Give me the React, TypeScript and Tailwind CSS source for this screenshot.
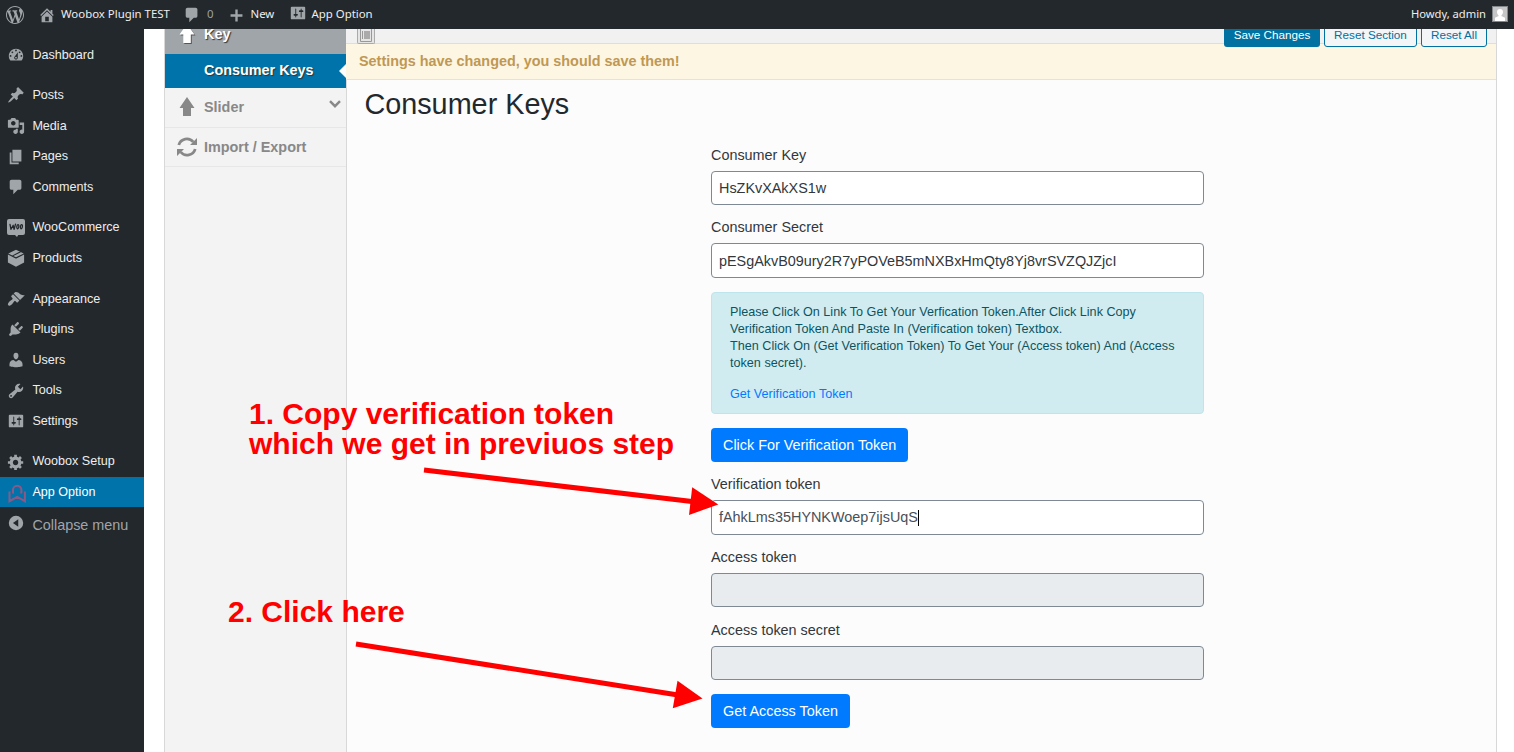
import React from "react";

const icons = {
  wordpress:
    "M20 10c0-5.51-4.49-10-10-10C4.48 0 0 4.49 0 10c0 5.52 4.48 10 10 10 5.51 0 10-4.48 10-10zM7.78 15.37L4.37 6.22c.55-.02 1.17-.08 1.17-.08.5-.06.44-1.13-.06-1.11 0 0-1.45.11-2.37.11-.18 0-.37 0-.58-.01C4.12 2.69 6.87 1.11 10 1.11c2.33 0 4.45.87 6.05 2.34-.68-.11-1.65.39-1.65 1.58 0 .74.45 1.36.9 2.1.35.61.55 1.36.55 2.46 0 1.49-1.4 5-1.4 5l-3.03-8.37c.54-.02.82-.17.82-.17.5-.05.44-1.25-.06-1.22 0 0-1.44.12-2.38.12-.87 0-2.33-.12-2.33-.12-.5-.03-.56 1.2-.06 1.22l.92.08 1.26 3.41zM17.41 10c.24-.64.74-1.87.43-4.25.7 1.29 1.05 2.71 1.05 4.25 0 3.29-1.73 6.24-4.4 7.78.97-2.59 1.94-5.2 2.92-7.78zM6.1 18.09C3.12 16.65 1.11 13.53 1.11 10c0-1.3.23-2.48.72-3.59C3.25 10.3 4.67 14.2 6.1 18.09zm4.03-6.63l2.58 6.98c-.86.29-1.76.45-2.71.45-.79 0-1.57-.11-2.29-.33.81-2.38 1.62-4.74 2.42-7.1z",
  home: "M16 8.5l1.53 1.53-1.06 1.06L10 4.6l-6.47 6.49-1.06-1.06L10 2.5l4 4v-2h2v4zm-6-2.46l6 5.99V18H4v-5.97zM12 17v-5H8v5h4z",
  comments: "M5 2h9c1.1 0 2 .9 2 2v7c0 1.1-.9 2-2 2h-2l-5 5v-5H5c-1.1 0-2-.9-2-2V4c0-1.1.9-2 2-2z",
  plus: "M17 8.600v2.800h-5.600V17H8.600v-5.600H3V8.600h5.600V3h2.800v5.600z",
  dashboard:
    "M3.76 16h12.48c1.1-1.37 1.76-3.11 1.76-5 0-4.42-3.58-8-8-8s-8 3.58-8 8c0 1.89.66 3.63 1.76 5zM10 4c.55 0 1 .45 1 1s-.45 1-1 1-1-.45-1-1 .45-1 1-1zM6 6c.55 0 1 .45 1 1s-.45 1-1 1-1-.45-1-1 .45-1 1-1zm8 0c.55 0 1 .45 1 1s-.45 1-1 1-1-.45-1-1 .45-1 1-1zm-5.37 5.55L12 7v6c0 1.1-.9 2-2 2s-2-.9-2-2c0-.57.24-1.08.63-1.45zM4 10c.55 0 1 .45 1 1s-.45 1-1 1-1-.45-1-1 .45-1 1-1zm12 0c.55 0 1 .45 1 1s-.45 1-1 1-1-.45-1-1 .45-1 1-1zm-5 3c0-.55-.45-1-1-1s-1 .45-1 1 .45 1 1 1 1-.45 1-1z",
  post: "M10.44 3.02l1.82-1.82 6.36 6.35-1.83 1.82c-1.05-.68-2.48-.57-3.41.36l-.75.75c-.92.93-1.04 2.35-.35 3.41l-1.83 1.82-2.41-2.41-2.8 2.79c-.42.42-3.38 2.71-3.8 2.29s1.86-3.39 2.28-3.81l2.79-2.79L4.1 9.36l1.83-1.82c1.05.69 2.48.57 3.4-.36l.75-.75c.93-.92 1.05-2.35.36-3.41z",
  media:
    "M13 11V4c0-.55-.45-1-1-1h-1.67L9 1H5L3.67 3H2c-.55 0-1 .45-1 1v7c0 .55.45 1 1 1h10c.55 0 1-.45 1-1zM7 4.5c1.38 0 2.5 1.12 2.5 2.5S8.38 9.5 7 9.5 4.5 8.38 4.5 7 5.62 4.5 7 4.5zM14 6h5v10.5c0 1.38-1.12 2.5-2.5 2.5S14 17.88 14 16.5s1.12-2.5 2.5-2.5c.17 0 .34.02.5.05V9h-3V6zm-4 8.05V13h2v3.5c0 1.38-1.12 2.5-2.5 2.5S7 17.88 7 16.5 8.12 14 9.5 14c.17 0 .34.02.5.05z",
  page: "M6 15V2h10v13H6zm-1 1h8v2H3V5h2v11z",
  products: "M10 .8l8.6 4.1-8.6 4.4-3-1.5 8.4-4.3-1.1-.6-8.5 4.3-4.4-2.3zM1 6l8.6 4.5h.8L19 6v9l-9 4.6L1 15z",
  appearance:
    "M14.48 11.06L7.41 3.99l1.5-1.5c.5-.56 2.3-.47 3.51.32 1.21.8 1.43 1.28 2.91 2.1 1.18.64 2.45 1.26 4.45.85zm-.71.71L6.7 4.7 4.93 6.47c-.39.39-.39 1.02 0 1.41l1.06 1.06c.39.39.39 1.03 0 1.42-.6.6-1.43 1.11-2.21 1.69-.35.26-.7.53-1.01.84C1.43 14.23.4 16.08 1.4 17.07c.99 1 2.84-.03 4.18-1.36.31-.31.58-.66.85-1.02.57-.78 1.08-1.61 1.69-2.21.39-.39 1.02-.39 1.41 0l1.06 1.06c.39.39 1.02.39 1.41 0z",
  plugins:
    "M13.11 4.36L9.87 7.6 8 5.73l3.24-3.24c.35-.34 1.05-.2 1.56.32.52.51.66 1.21.31 1.55zm-8 1.77l.91-1.12 9.01 9.01-1.19.84c-.71.71-2.63 1.16-3.82 1.16H6.14L4.9 17.26c-.59.59-1.54.59-2.12 0-.59-.58-.59-1.53 0-2.12l1.24-1.24v-3.88c0-1.13.4-3.19 1.09-3.89zm7.26 3.97l3.24-3.24c.34-.35 1.04-.21 1.55.31.52.51.66 1.21.31 1.55l-3.24 3.25z",
  users:
    "M10 9.25c-2.27 0-2.73-3.44-2.73-3.44C7 4.02 7.82 2 9.97 2c2.16 0 2.98 2.02 2.71 3.81 0 0-.41 3.44-2.68 3.44zm0 2.57L12.72 10c2.39 0 4.52 2.33 4.52 4.53v2.49s-3.65 1.13-7.24 1.13c-3.65 0-7.24-1.13-7.24-1.13v-2.49c0-2.25 1.94-4.48 4.47-4.48z",
  tools:
    "M16.68 9.77c-1.34 1.34-3.3 1.67-4.95.99l-5.41 6.52c-.99.99-2.59.99-3.58 0s-.99-2.59 0-3.57l6.52-5.42c-.68-1.65-.35-3.61.99-4.95 1.28-1.28 3.12-1.62 4.72-1.06l-2.89 2.89 2.82 2.82 2.86-2.87c.53 1.58.18 3.39-1.08 4.65zM3.81 16.21c.4.39 1.04.39 1.43 0 .4-.4.4-1.04 0-1.43-.39-.4-1.03-.4-1.43 0-.39.39-.39 1.03 0 1.43z",
  settings:
    "M18 16V4c0-.55-.45-1-1-1H3c-.55 0-1 .45-1 1v12c0 .55.45 1 1 1h14c.55 0 1-.45 1-1zM8 11h1c.55 0 1 .45 1 1s-.45 1-1 1H8v1.5c0 .28-.22.5-.5.5s-.5-.22-.5-.5V13H6c-.55 0-1-.45-1-1s.45-1 1-1h1V5.5c0-.28.22-.5.5-.5s.5.22.5.5V11zm5-2h-1c-.55 0-1-.45-1-1s.45-1 1-1h1V5.5c0-.28.22-.5.5-.5s.5.22.5.5V7h1c.55 0 1 .45 1 1s-.45 1-1 1h-1v5.5c0 .28-.22.5-.5.5s-.5-.22-.5-.5V9z",
  generic:
    "M18 12h-2.18c-.17.7-.44 1.35-.81 1.93l1.54 1.54-2.1 2.1-1.54-1.54c-.58.36-1.23.63-1.91.79V19H8v-2.18c-.68-.16-1.33-.43-1.91-.79l-1.54 1.54-2.12-2.12 1.54-1.54c-.36-.58-.63-1.23-.79-1.91H1V9.03h2.17c.16-.7.44-1.35.8-1.94L2.43 5.55l2.1-2.1 1.54 1.54c.58-.37 1.24-.64 1.93-.81V2h3v2.18c.68.16 1.33.43 1.91.79l1.54-1.54 2.12 2.12-1.54 1.54c.36.59.64 1.24.8 1.94H18V12zm-8.5 1.5c1.66 0 3-1.34 3-3s-1.34-3-3-3-3 1.34-3 3 1.34 3 3 3z",
  collapse: "M10 2a8 8 0 1 0 0 16 8 8 0 0 0 0-16zM12.5 5.8v8.4L6.6 10z",
};

type IconName = keyof typeof icons;

function Icon({ name, className }: { name: IconName; className?: string }) {
  return (
    <svg viewBox="0 0 20 20" fill="currentColor" fillRule="evenodd" className={className ?? "size-[18px]"}>
      <path d={icons[name]} />
    </svg>
  );
}

function WooIcon() {
  return (
    <svg viewBox="0 0 18 18" className="size-[18px]">
      <path d="M2 0h14a2 2 0 0 1 2 2v12a2 2 0 0 1-2 2h-4.800l-1.200 2-2-2H2a2 2 0 0 1-2-2V2a2 2 0 0 1 2-2z" fill="#a0a5aa" />
      <g fill="none" stroke="#23282d" strokeWidth="1.300" strokeLinecap="round" strokeLinejoin="round">
        <path d="M3 5.400l1 4.900 2.200-4 .9 4 1.400-5.200" />
        <ellipse cx="10.800" cy="7.700" rx="1" ry="2.100" transform="rotate(12 10.800 7.700)" />
        <ellipse cx="14.400" cy="7.700" rx="1" ry="2.100" transform="rotate(12 14.400 7.700)" />
      </g>
    </svg>
  );
}

function AppOptionIcon() {
  return (
    <svg viewBox="0 0 18 20" className="ml-px h-5 w-[18px] shrink-0 translate-y-[2px]" fill="none" stroke="#8a5a86" strokeWidth="2">
      <path d="M5 9V6a4.200 4.200 0 0 1 8.400 0v3" />
      <path d="M6 8.800H4.500M12.400 8.800h1.500M1.500 7.500v9.700l7.700-4.300 7.700 4.300V7.500" />
    </svg>
  );
}

const menu: { label: string; icon: IconName | "woo" | "app" }[][] = [
  [{ label: "Dashboard", icon: "dashboard" }],
  [
    { label: "Posts", icon: "post" },
    { label: "Media", icon: "media" },
    { label: "Pages", icon: "page" },
    { label: "Comments", icon: "comments" },
  ],
  [
    { label: "WooCommerce", icon: "woo" },
    { label: "Products", icon: "products" },
  ],
  [
    { label: "Appearance", icon: "appearance" },
    { label: "Plugins", icon: "plugins" },
    { label: "Users", icon: "users" },
    { label: "Tools", icon: "tools" },
    { label: "Settings", icon: "settings" },
  ],
  [
    { label: "Woobox Setup", icon: "generic" },
    { label: "App Option", icon: "app" },
  ],
];

function AdminBar() {
  return (
    <header className="flex h-[29px] shrink-0 items-center bg-[#23282d] font-['Noto_Sans',sans-serif] text-[11.400px] leading-[29px] text-[#eee]">
      <span className="ml-[6px] text-[#a0a5aa]"><Icon name="wordpress" /></span>
      <span className="ml-[14px] text-[#a0a5aa]"><Icon name="home" /></span>
      <span className="ml-[5px] w-[109px] whitespace-nowrap -translate-y-px">Woobox Plugin TEST</span>
      <span className="ml-[13px] mt-[1px] text-[#a0a5aa]"><Icon name="comments" /></span>
      <span className="ml-[6px] text-[#9ca1a6] -translate-y-px">0</span>
      <span className="ml-[14px] mt-px text-[#a0a5aa]"><Icon name="plus" className="size-[17px]" /></span>
      <span className="ml-[6px] w-[24px] whitespace-nowrap -translate-y-px">New</span>
      <span className="ml-[14px] -mt-[3px] text-[#a0a5aa]"><Icon name="settings" /></span>
      <span className="ml-[5px] whitespace-nowrap -translate-y-px">App Option</span>
      <span className="ml-auto text-[11.200px] -translate-y-px">Howdy, admin</span>
      <svg viewBox="0 0 16 16" className="ml-[6px] mr-[6px] size-4 -translate-y-px">
        <rect width="16" height="16" fill="#82878c" />
        <rect x="1" y="1" width="14" height="14" fill="#c6c6c6" />
        <path d="M8 3c1.900 0 3 1.300 3 3 0 1.500-.8 2.800-1.600 3.400v.6l3.600 1.700V15H3v-3.300L6.600 10v-.6C5.800 8.800 5 7.500 5 6c0-1.700 1.100-3 3-3z" fill="#fff" />
      </svg>
    </header>
  );
}

function AdminMenu() {
  return (
    <nav className="flex w-36 shrink-0 flex-col gap-[9.900px] bg-[#23282d] pt-[10.600px] text-[12.600px] text-[#eee]">
      {menu.map((group, i) => (
        <ul key={i}>
          {group.map(({ label, icon }) => (
            <li
              key={label}
              className={
                icon === "app"
                  ? "flex h-[30.600px] items-center bg-[#0073aa] text-white"
                  : "flex h-[30.600px] items-center"
              }
            >
              <span className="ml-[7.200px] mr-[7.200px] flex w-[18px] justify-center text-[#a0a5aa]">
                {icon === "woo" ? <WooIcon /> : icon === "app" ? <AppOptionIcon /> : <Icon name={icon} />}
              </span>
              <span className="pt-[0.600px]">{label}</span>
            </li>
          ))}
          {i === menu.length - 1 && (
            <li className="flex h-[35px] items-center text-[14.400px] text-[#a0a5aa]">
              <span className="ml-[7.200px] mr-[7.200px] -mt-[3px]"><Icon name="collapse" /></span>
              <span className="pt-[1.500px]">Collapse menu</span>
            </li>
          )}
        </ul>
      ))}
    </nav>
  );
}

function SectionTabs() {
  return (
    <aside className="w-[182px] shrink-0 border-r border-[#d8d8d8] bg-[#f3f3f3] text-[14.400px] font-bold text-[#888]">
      <div className="flex h-[25px] items-start bg-[#a0a5aa] text-white [text-shadow:1px_1px_1px_#333]">
        <svg viewBox="0 0 18 20" className="ml-[12px] mt-[-5px] h-5 w-[20px] drop-shadow-[1px_1px_0_#555]" fill="currentColor">
          <path d="M9 0l7.500 10.500h-3.700v8.500H5.300v-8.500H1.500z" />
        </svg>
        <span className="ml-[7px] mt-[-5px] leading-5">Key</span>
      </div>
      <div className="relative flex h-[34px] items-center bg-[#0073aa] pl-[39px] text-white [text-shadow:1px_1px_1px_#333]">
        Consumer Keys
        <svg viewBox="0 0 7 14" className="absolute right-0 top-[10px] h-[14px] w-[7px]" fill="#fcfcfc">
          <path d="M7 0v14L0 7z" />
        </svg>
      </div>
      <div className="flex h-10 items-center border-b border-[#e7e7e7]">
        <svg viewBox="0 0 18 20" className="-mt-[2px] ml-[12px] h-5 w-[20px]" fill="currentColor">
          <path d="M9 0l7.500 11h-3.500v8H5v-8H1.500z" />
        </svg>
        <span className="ml-[7px]">Slider</span>
        <svg viewBox="0 0 12 8" className="mb-[7px] ml-auto mr-[5px] h-2 w-3" fill="none" stroke="currentColor" strokeWidth="2.400">
          <path d="M1 1.200l5 5 5-5" />
        </svg>
      </div>
      <div className="flex h-[39px] items-center border-b border-[#e7e7e7]">
        <svg viewBox="0 0 20 20" className="-mt-px ml-[12px] size-5" fill="none" stroke="currentColor" strokeWidth="2.800">
          <path d="M1.800 8a8.300 8.300 0 0 1 14.500-3M18.200 12a8.300 8.300 0 0 1-14.500 3" />
          <path d="M20 1v7h-7zM0 19v-7h7z" fill="currentColor" stroke="none" />
        </svg>
        <span className="ml-[7px] pt-[2px]">Import / Export</span>
      </div>
    </aside>
  );
}

const label = "flex h-[22px] items-center pt-[2px]";
const input = "mt-[5px] flex w-full items-center rounded-[4px] border border-[#7e8993] px-[7px]";
const button = "flex h-[34px] items-center rounded-[4px] bg-[#007bff] px-3 pt-px text-white";

function Settings() {
  return (
    <main className="flex min-w-0 flex-1 flex-col">
      <div className="-ml-px flex h-[15px] shrink-0 items-start border-b border-[#dedede] bg-[#f1f1f1] text-[11.700px]">
        <span className="ml-[11px] flex h-[15px] w-[18px] justify-center rounded-b-[2px] border border-t-0 border-[#aaa] bg-[#e5e5e5]">
          <svg viewBox="0 0 12 13" className="h-[13px] w-3" fill="none" stroke="#999">
            <path d="M.5-1v13.500h11V-1M2.500 2v8" />
            <path d="M4 2h6v8H4z" fill="#aaa" stroke="none" />
          </svg>
        </span>
        <div className="z-10 -mt-[6px] ml-auto mr-[9px] flex gap-1">
          <span className="flex h-6 w-24 items-center justify-center rounded-[3px] bg-[#0071a1] text-white">Save Changes</span>
          <span className="flex h-6 w-[93px] items-center justify-center rounded-[3px] border border-[#0071a1] bg-[#f3f5f6] text-[#0071a1]">Reset Section</span>
          <span className="flex h-6 w-[66px] items-center justify-center rounded-[3px] border border-[#0071a1] bg-[#f3f5f6] text-[#0071a1]">Reset All</span>
        </div>
      </div>
      <div className="-ml-px flex h-9 shrink-0 items-center border-b border-[#e2e2e2] bg-[#fdf6e3] pl-[13px] text-[14.400px] font-bold text-[#c09853]">
        Settings have changed, you should save them!
      </div>
      <h1 className="mt-[6px] h-[36px] pl-[17.400px] text-[28.800px] leading-[36px] text-[#23282d]">Consumer Keys</h1>
      <form className="ml-[364px] mt-[22px] flex w-[493px] flex-col items-start text-[14.400px] text-[#32373c]">
        <div className={label}>Consumer Key</div>
        <div className={`${input} h-[34px] bg-white pt-px`}>HsZKvXAkXS1w</div>
        <div className={`${label} mt-[11px]`}>Consumer Secret</div>
        <div className={`${input} h-[35px] bg-white pt-[2px]`}>pESgAkvB09ury2R7yPOVeB5mNXBxHmQty8Yj8vrSVZQJZjcI</div>
        <div className="mt-[14px] h-[122px] w-full rounded-[4px] border border-[#bee5eb] bg-[#d1ecf1] pl-[18px] pt-[11px] text-[12.600px] leading-[17px] tracking-[0.015px] text-[#0c5460]">
          Please Click On Link To Get Your Verfication Token.After Click Link Copy
          <br />
          Verification Token And Paste In (Verification token) Textbox.
          <br />
          Then Click On (Get Verification Token) To Get Your (Access token) And (Access
          <br />
          token secret).
          <div className="mt-[14px] text-[#007bff]">Get Verification Token</div>
        </div>
        <div className={`${button} mt-[14px]`}>Click For Verification Token</div>
        <div className={`${label} mt-[11px]`}>Verification token</div>
        <div className={`${input} h-[35px] bg-white text-[#495057]`}>
          fAhkLms35HYNKWoep7ijsUqS
          <span className="h-4 w-px bg-black" />
        </div>
        <div className={`${label} mt-[11px]`}>Access token</div>
        <div className={`${input} h-[34px] bg-[#e9ecef]`} />
        <div className={`${label} mt-[12px]`}>Access token secret</div>
        <div className={`${input} h-[34px] bg-[#e9ecef]`} />
        <div className={`${button} mt-[14px]`}>Get Access Token</div>
      </form>
    </main>
  );
}

function Annotations() {
  return (
    <div className="pointer-events-none absolute inset-0 z-20 text-[30px] font-bold leading-[30px] text-[#f00]">
      <p className="absolute left-[249px] top-[399px] whitespace-nowrap">
        1. Copy verification token
        <br />
        which we get in previuos step
      </p>
      <p className="absolute left-[228px] top-[597px] whitespace-nowrap">2. Click here</p>
      <svg viewBox="0 0 1514 752" className="absolute inset-0 h-[752px] w-[1514px]" fill="#f00" stroke="#f00">
        <path d="M424 470L692 501.500" strokeWidth="5" />
        <path d="M718.300 504.400L692.200 487.300 689 515z" stroke="none" />
        <path d="M356 644L678 695" strokeWidth="5" />
        <path d="M702.500 698.500L677.500 680.700 672.800 708.300z" stroke="none" />
      </svg>
    </div>
  );
}

export default function App() {
  return (
    <div className="relative flex h-[752px] w-[1514px] flex-col overflow-hidden bg-white font-['Liberation_Sans',Arial,sans-serif]">
      <AdminBar />
      <div className="flex min-h-0 flex-1 overflow-hidden">
        <AdminMenu />
        <div className="ml-5 flex w-[1333px] border-x border-[#d8d8d8] bg-[#fcfcfc]">
          <SectionTabs />
          <Settings />
        </div>
      </div>
      <Annotations />
    </div>
  );
}
